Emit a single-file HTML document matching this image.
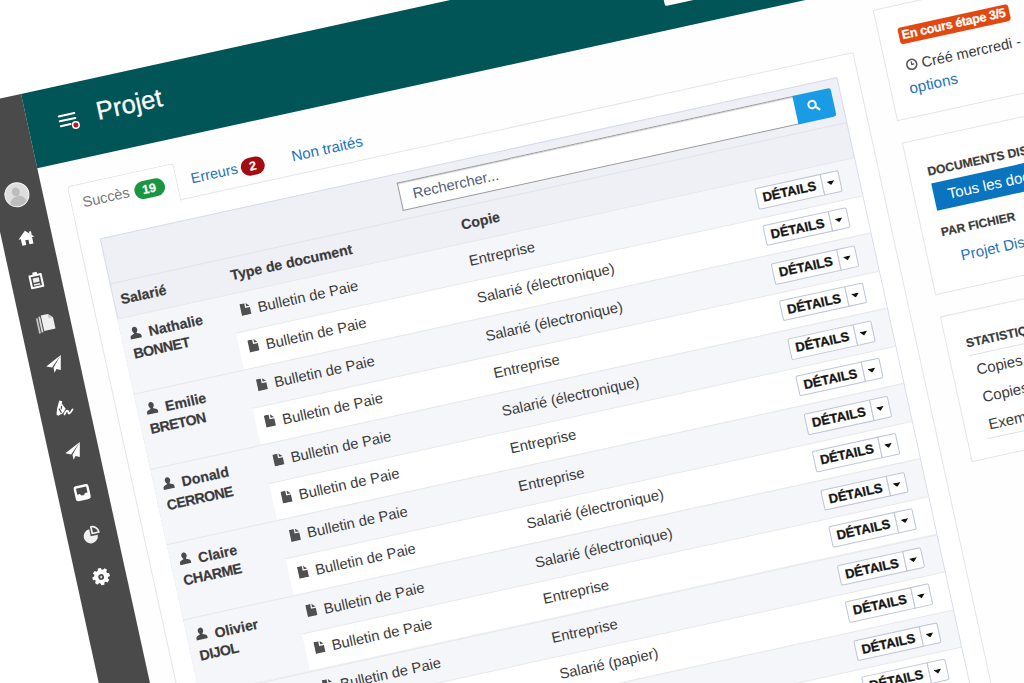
<!DOCTYPE html><html><head><meta charset="utf-8"><title>Projet</title><style>
*{box-sizing:border-box}
html,body{margin:0;padding:0}
body{width:1024px;height:683px;overflow:hidden;background:#fff;font-family:"Liberation Sans",sans-serif;color:#333;position:relative}
#stage{position:absolute;left:0;top:0;width:0;height:0;transform-origin:0 0;transform:translate(21px,94px) rotate(-12.35deg);font-size:14.75px;line-height:20px;color:#3a3a3a}
#stage div,#stage span,#stage svg{position:absolute}
.t{white-space:nowrap}
.b{font-weight:700;font-size:14.2px;-webkit-text-stroke:0.2px currentColor}
.card{background:#fff;border:1px solid #e4e5ea}
.row{left:46px;width:754px;height:38.55px;border-top:1px solid #e6e7ea}
.odd{background:#f5f6fa}
.even{background:#f5f6fa;border-top:none}
.nm{left:46px;width:112px;height:60px}
.even .w{left:112.700px;top:0;right:0;bottom:0;background:#fff;border-top:1px solid #e6e7ea}
.btn{background:#fff;border:1px solid #bcc5d7;height:21.5px;top:8.2px;font-weight:700;font-size:13px;line-height:19.5px;color:#151515;text-align:center;-webkit-text-stroke:0.3px #151515}
.ic{display:block}
</style></head><body><div id="stage">
<div style="left:0;top:75px;width:1300px;height:900px;background:#fefefe"></div>
<div style="left:-50px;top:0;width:50px;height:900px;background:#4a4a4a"></div>
<div style="left:0;top:0;width:1300px;height:76px;background:#015557"></div>
<div style="left:648px;top:20px;width:48px;height:32px;background:#fff;border-radius:2px"></div>
<svg style="left:30px;top:26px" width="22" height="22" viewBox="0 0 22 22"><g stroke="#fff" stroke-width="2" stroke-linecap="round"><path d="M2 4h16M2 9h16M2 14h10"/></g><circle cx="17" cy="16" r="4" fill="#fff"/><circle cx="17" cy="16" r="2.500" fill="#c4161c"/></svg>
<div class="t" style="left:70px;top:18px;font-size:25.6px;line-height:30px;color:#fff;-webkit-text-stroke:0.3px #fff">Projet</div>
<div style="left:-38.5px;top:85px;width:25px;height:25px;border-radius:50%;background:#dedede;border:1.5px solid #fafafa;overflow:hidden"><div style="left:7.5px;top:4px;width:8px;height:9px;border-radius:50%;background:#bdbdbd"></div><div style="left:3px;top:13px;width:17px;height:14px;border-radius:8px 8px 0 0;background:#bdbdbd"></div></div>
<svg style="left:-35px;top:132px" width="19" height="19" viewBox="0 0 20 20"><path d="M10 2.5 L1.5 10.5 H4 V17.5 H8.3 V12.5 H11.7 V17.5 H16 V10.5 H18.500 Z M14 4.3 h2.2 v3.8 L14 6 Z" fill="#fff"/></svg>
<svg style="left:-34.5px;top:176px" width="18" height="18" viewBox="0 0 20 20"><path d="M7.5 3.5 V1 h5 v2.500 H16.500 a1 1 0 0 1 1 1 V18 a1 1 0 0 1 -1 1 H3.5 a1 1 0 0 1 -1 -1 V4.5 a1 1 0 0 1 1 -1 Z" fill="#fff"/><rect x="4.800" y="5.800" width="10.400" height="11" fill="#4a4a4a"/><rect x="6.500" y="7.500" width="7" height="5" fill="#eee"/><rect x="6.500" y="14" width="7" height="1.800" fill="#eee"/></svg>
<svg style="left:-35.5px;top:218.5px" width="20" height="20" viewBox="0 0 20 20"><path d="M7 1.500 h7 l4.500 4.500 V17.500 H7 Z" fill="#f0f0f0"/><path d="M14 1.500 v4.500 h4.500" fill="#c8c8c8"/><rect x="4.200" y="2.500" width="1.800" height="16" fill="#d8d8d8"/><rect x="1.500" y="3.500" width="1.800" height="15.500" fill="#c4c4c4"/></svg>
<svg style="left:-35px;top:261.5px" width="19" height="19" viewBox="0 0 20 20"><path d="M19 1.5 L1.5 10 L7.2 12.4 Z M19 1.5 L8.6 13 L8.6 18.5 L11.4 15 L15.6 17 Z" fill="#fff"/></svg>
<svg style="left:-36px;top:305.5px" width="21" height="21" viewBox="0 0 20 20"><path d="M7.500 1.500 l2.500 1.200 -.8 2.300 2.600 5.500 -3.300 3.500 -5 1.500 -1.500 -1.500 2 -6 Z" fill="#fff"/><path d="M5.500 9 l1.500 4.500 M8.500 7 l-1 3" stroke="#4a4a4a" stroke-width="1.100" fill="none"/><path d="M9.500 15.500 c2 -3.500 4.500 -3.500 4 -1.500 s1 2.500 4.500 -1.500" stroke="#fff" stroke-width="1.700" fill="none" stroke-linecap="round"/></svg>
<svg style="left:-35px;top:351px" width="19" height="19" viewBox="0 0 20 20"><path d="M19 1.5 L1.5 10 L7.2 12.4 Z M19 1.5 L8.6 13 L8.6 18.5 L11.4 15 L15.6 17 Z" fill="#fff"/></svg>
<svg style="left:-35px;top:392.8px" width="19" height="19" viewBox="0 0 20 20"><rect x="2" y="2" width="16" height="16" rx="2.500" fill="#fff"/><path d="M4.500 4.500 h11 v6.500 h-2.800 l-1.200 1.800 h-3 l-1.200 -1.800 H4.500 Z" fill="#4a4a4a"/></svg>
<svg style="left:-35px;top:436px" width="19" height="19" viewBox="0 0 20 20"><path d="M9 4 A7.500 7.500 0 1 0 16.500 11.500 H9 Z" fill="#f0f0f0"/><path d="M11.200 1.800 A7.300 7.300 0 0 1 18.300 9 H11.200 Z" fill="none" stroke="#f0f0f0" stroke-width="1.800" stroke-linejoin="round"/></svg>
<svg style="left:-34.5px;top:479.7px" width="18" height="18" viewBox="0 0 20 20"><path d="M8.300 1.500h3.400l.5 2.300 1.500.7 2-1.300 2.400 2.400-1.300 2 .7 1.500 2.300.5v3.400l-2.300.5-.7 1.500 1.300 2-2.400 2.400-2-1.300-1.500.7-.5 2.300H8.300l-.5-2.300-1.500-.7-2 1.300-2.400-2.400 1.300-2-.7-1.500L.2 13.700V10.300l2.300-.5.7-1.500-1.300-2 2.400-2.400 2 1.300 1.500-.7Z" transform="translate(0,-2)" fill="#fff"/><circle cx="10" cy="10" r="3.2" fill="#4a4a4a"/><circle cx="10" cy="10" r="1.3" fill="#ddd"/></svg>
<div class="card" style="left:25px;top:137px;width:797px;height:800px"></div>
<div style="left:25px;top:100px;width:109px;height:39.5px;background:#fff;border:1px solid #dfe3ec;border-bottom:none;border-radius:4px 4px 0 0"></div>
<div class="t" style="left:37px;top:108.5px;font-size:14.6px;color:#777">Succès</div>
<div class="t b" style="left:89.500px;top:111px;width:31px;height:18px;border-radius:9px;background:#1a9641;color:#fff;font-size:12.500px;line-height:18px;text-align:center">19</div>
<div class="t" style="left:148px;top:108.5px;font-size:14.5px;color:#1b74b8">Erreurs</div>
<div class="t b" style="left:199px;top:111px;width:24px;height:18px;border-radius:9px;background:#a30d12;color:#fff;font-size:12.500px;line-height:18px;text-align:center">2</div>
<div class="t" style="left:251px;top:108.5px;font-size:15px;color:#1b74b8">Non traités</div>
<div style="left:46px;top:157.500px;width:754.500px;height:800px;background:#eff0f5;border:1px solid #d6dcee"></div>
<div style="left:347.500px;top:167px;width:406px;height:28.500px;background:#fff;border:1px solid #9a9a9a;border-right:none;box-shadow:inset 0 1px 1px rgba(0,0,0,.15)"></div>
<div class="t" style="left:361.500px;top:171px;color:#50607a">Rechercher...</div>
<div style="left:752.500px;top:167px;width:39.200px;height:28.500px;background:#1a9be6;border-radius:0 3px 3px 0"></div>
<svg style="left:765px;top:174px" width="14" height="14" viewBox="0 0 14 14"><circle cx="5.500" cy="5.500" r="3.700" fill="none" stroke="#fff" stroke-width="2"/><path d="M8.500 8.500l3.2 3.200" stroke="#fff" stroke-width="2.200" stroke-linecap="round"/></svg>
<div style="left:46px;top:203.800px;width:754px;height:36px;border-top:1px solid #e2e3e8"></div>
<div class="t b" style="left:53.500px;top:212.3px">Salarié</div>
<div class="t b" style="left:166px;top:212.3px">Type de document</div>
<div class="t b" style="left:402px;top:212.3px">Copie</div>
<div class="row odd" style="top:240px"><svg style="left:122.3px;top:10.8px" viewBox="0 0 12 14" width="10.500" height="12.500"><path d="M.5 0H6V5.5H11.5V14H.5Z M7.5 0L11.5 4H7.5Z" fill="#505050"/></svg><div class="t" style="left:139.8px;top:8.2px">Bulletin de Paie</div><div class="t" style="left:356px;top:8.2px">Entreprise</div><div class="btn" style="left:650px;width:67.5px;border-radius:2px 0 0 2px">DÉTAILS</div><div class="btn" style="left:716.5px;width:19px;border-radius:0 2px 2px 0"><svg style="left:4.6px;top:8px" width="8" height="4.3" viewBox="0 0 8 5" preserveAspectRatio="none"><path d="M0 0h8L4 5z" fill="#111"/></svg></div></div>
<div class="row even" style="top:278.55px"><div class="w"></div><svg style="left:122.3px;top:10.8px" viewBox="0 0 12 14" width="10.500" height="12.500"><path d="M.5 0H6V5.5H11.5V14H.5Z M7.5 0L11.5 4H7.5Z" fill="#505050"/></svg><div class="t" style="left:139.8px;top:8.2px">Bulletin de Paie</div><div class="t" style="left:356px;top:8.2px">Salarié (électronique)</div><div class="btn" style="left:650px;width:67.5px;border-radius:2px 0 0 2px">DÉTAILS</div><div class="btn" style="left:716.5px;width:19px;border-radius:0 2px 2px 0"><svg style="left:4.6px;top:8px" width="8" height="4.3" viewBox="0 0 8 5" preserveAspectRatio="none"><path d="M0 0h8L4 5z" fill="#111"/></svg></div></div>
<div class="row odd" style="top:317.1px"><svg style="left:122.3px;top:10.8px" viewBox="0 0 12 14" width="10.500" height="12.500"><path d="M.5 0H6V5.5H11.5V14H.5Z M7.5 0L11.5 4H7.5Z" fill="#505050"/></svg><div class="t" style="left:139.8px;top:8.2px">Bulletin de Paie</div><div class="t" style="left:356px;top:8.2px">Salarié (électronique)</div><div class="btn" style="left:650px;width:67.5px;border-radius:2px 0 0 2px">DÉTAILS</div><div class="btn" style="left:716.5px;width:19px;border-radius:0 2px 2px 0"><svg style="left:4.6px;top:8px" width="8" height="4.3" viewBox="0 0 8 5" preserveAspectRatio="none"><path d="M0 0h8L4 5z" fill="#111"/></svg></div></div>
<div class="row even" style="top:355.65px"><div class="w"></div><svg style="left:122.3px;top:10.8px" viewBox="0 0 12 14" width="10.500" height="12.500"><path d="M.5 0H6V5.5H11.5V14H.5Z M7.5 0L11.5 4H7.5Z" fill="#505050"/></svg><div class="t" style="left:139.8px;top:8.2px">Bulletin de Paie</div><div class="t" style="left:356px;top:8.2px">Entreprise</div><div class="btn" style="left:650px;width:67.5px;border-radius:2px 0 0 2px">DÉTAILS</div><div class="btn" style="left:716.5px;width:19px;border-radius:0 2px 2px 0"><svg style="left:4.6px;top:8px" width="8" height="4.3" viewBox="0 0 8 5" preserveAspectRatio="none"><path d="M0 0h8L4 5z" fill="#111"/></svg></div></div>
<div class="row odd" style="top:394.2px"><svg style="left:122.3px;top:10.8px" viewBox="0 0 12 14" width="10.500" height="12.500"><path d="M.5 0H6V5.5H11.5V14H.5Z M7.5 0L11.5 4H7.5Z" fill="#505050"/></svg><div class="t" style="left:139.8px;top:8.2px">Bulletin de Paie</div><div class="t" style="left:356px;top:8.2px">Salarié (électronique)</div><div class="btn" style="left:650px;width:67.5px;border-radius:2px 0 0 2px">DÉTAILS</div><div class="btn" style="left:716.5px;width:19px;border-radius:0 2px 2px 0"><svg style="left:4.6px;top:8px" width="8" height="4.3" viewBox="0 0 8 5" preserveAspectRatio="none"><path d="M0 0h8L4 5z" fill="#111"/></svg></div></div>
<div class="row even" style="top:432.75px"><div class="w"></div><svg style="left:122.3px;top:10.8px" viewBox="0 0 12 14" width="10.500" height="12.500"><path d="M.5 0H6V5.5H11.5V14H.5Z M7.5 0L11.5 4H7.5Z" fill="#505050"/></svg><div class="t" style="left:139.8px;top:8.2px">Bulletin de Paie</div><div class="t" style="left:356px;top:8.2px">Entreprise</div><div class="btn" style="left:650px;width:67.5px;border-radius:2px 0 0 2px">DÉTAILS</div><div class="btn" style="left:716.5px;width:19px;border-radius:0 2px 2px 0"><svg style="left:4.6px;top:8px" width="8" height="4.3" viewBox="0 0 8 5" preserveAspectRatio="none"><path d="M0 0h8L4 5z" fill="#111"/></svg></div></div>
<div class="row odd" style="top:471.3px"><svg style="left:122.3px;top:10.8px" viewBox="0 0 12 14" width="10.500" height="12.500"><path d="M.5 0H6V5.5H11.5V14H.5Z M7.5 0L11.5 4H7.5Z" fill="#505050"/></svg><div class="t" style="left:139.8px;top:8.2px">Bulletin de Paie</div><div class="t" style="left:356px;top:8.2px">Entreprise</div><div class="btn" style="left:650px;width:67.5px;border-radius:2px 0 0 2px">DÉTAILS</div><div class="btn" style="left:716.5px;width:19px;border-radius:0 2px 2px 0"><svg style="left:4.6px;top:8px" width="8" height="4.3" viewBox="0 0 8 5" preserveAspectRatio="none"><path d="M0 0h8L4 5z" fill="#111"/></svg></div></div>
<div class="row even" style="top:509.85px"><div class="w"></div><svg style="left:122.3px;top:10.8px" viewBox="0 0 12 14" width="10.500" height="12.500"><path d="M.5 0H6V5.5H11.5V14H.5Z M7.5 0L11.5 4H7.5Z" fill="#505050"/></svg><div class="t" style="left:139.8px;top:8.2px">Bulletin de Paie</div><div class="t" style="left:356px;top:8.2px">Salarié (électronique)</div><div class="btn" style="left:650px;width:67.5px;border-radius:2px 0 0 2px">DÉTAILS</div><div class="btn" style="left:716.5px;width:19px;border-radius:0 2px 2px 0"><svg style="left:4.6px;top:8px" width="8" height="4.3" viewBox="0 0 8 5" preserveAspectRatio="none"><path d="M0 0h8L4 5z" fill="#111"/></svg></div></div>
<div class="row odd" style="top:548.4px"><svg style="left:122.3px;top:10.8px" viewBox="0 0 12 14" width="10.500" height="12.500"><path d="M.5 0H6V5.5H11.5V14H.5Z M7.5 0L11.5 4H7.5Z" fill="#505050"/></svg><div class="t" style="left:139.8px;top:8.2px">Bulletin de Paie</div><div class="t" style="left:356px;top:8.2px">Salarié (électronique)</div><div class="btn" style="left:650px;width:67.5px;border-radius:2px 0 0 2px">DÉTAILS</div><div class="btn" style="left:716.5px;width:19px;border-radius:0 2px 2px 0"><svg style="left:4.6px;top:8px" width="8" height="4.3" viewBox="0 0 8 5" preserveAspectRatio="none"><path d="M0 0h8L4 5z" fill="#111"/></svg></div></div>
<div class="row even" style="top:586.95px"><div class="w"></div><svg style="left:122.3px;top:10.8px" viewBox="0 0 12 14" width="10.500" height="12.500"><path d="M.5 0H6V5.5H11.5V14H.5Z M7.5 0L11.5 4H7.5Z" fill="#505050"/></svg><div class="t" style="left:139.8px;top:8.2px">Bulletin de Paie</div><div class="t" style="left:356px;top:8.2px">Entreprise</div><div class="btn" style="left:650px;width:67.5px;border-radius:2px 0 0 2px">DÉTAILS</div><div class="btn" style="left:716.5px;width:19px;border-radius:0 2px 2px 0"><svg style="left:4.6px;top:8px" width="8" height="4.3" viewBox="0 0 8 5" preserveAspectRatio="none"><path d="M0 0h8L4 5z" fill="#111"/></svg></div></div>
<div class="row odd" style="top:625.5px"><svg style="left:122.3px;top:10.8px" viewBox="0 0 12 14" width="10.500" height="12.500"><path d="M.5 0H6V5.5H11.5V14H.5Z M7.5 0L11.5 4H7.5Z" fill="#505050"/></svg><div class="t" style="left:139.8px;top:8.2px">Bulletin de Paie</div><div class="t" style="left:356px;top:8.2px">Entreprise</div><div class="btn" style="left:650px;width:67.5px;border-radius:2px 0 0 2px">DÉTAILS</div><div class="btn" style="left:716.5px;width:19px;border-radius:0 2px 2px 0"><svg style="left:4.6px;top:8px" width="8" height="4.3" viewBox="0 0 8 5" preserveAspectRatio="none"><path d="M0 0h8L4 5z" fill="#111"/></svg></div></div>
<div class="row even" style="top:664.05px"><div class="w"></div><svg style="left:122.3px;top:10.8px" viewBox="0 0 12 14" width="10.500" height="12.500"><path d="M.5 0H6V5.5H11.5V14H.5Z M7.5 0L11.5 4H7.5Z" fill="#505050"/></svg><div class="t" style="left:139.8px;top:8.2px">Bulletin de Paie</div><div class="t" style="left:356px;top:8.2px">Salarié (papier)</div><div class="btn" style="left:650px;width:67.5px;border-radius:2px 0 0 2px">DÉTAILS</div><div class="btn" style="left:716.5px;width:19px;border-radius:0 2px 2px 0"><svg style="left:4.6px;top:8px" width="8" height="4.3" viewBox="0 0 8 5" preserveAspectRatio="none"><path d="M0 0h8L4 5z" fill="#111"/></svg></div></div>
<div class="row odd" style="top:702.6px"><svg style="left:122.3px;top:10.8px" viewBox="0 0 12 14" width="10.500" height="12.500"><path d="M.5 0H6V5.5H11.5V14H.5Z M7.5 0L11.5 4H7.5Z" fill="#505050"/></svg><div class="t" style="left:139.8px;top:8.2px">Bulletin de Paie</div><div class="t" style="left:356px;top:8.2px">Entreprise</div><div class="btn" style="left:650px;width:67.5px;border-radius:2px 0 0 2px">DÉTAILS</div><div class="btn" style="left:716.5px;width:19px;border-radius:0 2px 2px 0"><svg style="left:4.6px;top:8px" width="8" height="4.3" viewBox="0 0 8 5" preserveAspectRatio="none"><path d="M0 0h8L4 5z" fill="#111"/></svg></div></div>
<div class="row even" style="top:741.15px"><div class="w"></div><svg style="left:122.3px;top:10.8px" viewBox="0 0 12 14" width="10.500" height="12.500"><path d="M.5 0H6V5.5H11.5V14H.5Z M7.5 0L11.5 4H7.5Z" fill="#505050"/></svg><div class="t" style="left:139.8px;top:8.2px">Bulletin de Paie</div><div class="t" style="left:356px;top:8.2px">Salarié (électronique)</div><div class="btn" style="left:650px;width:67.5px;border-radius:2px 0 0 2px">DÉTAILS</div><div class="btn" style="left:716.5px;width:19px;border-radius:0 2px 2px 0"><svg style="left:4.6px;top:8px" width="8" height="4.3" viewBox="0 0 8 5" preserveAspectRatio="none"><path d="M0 0h8L4 5z" fill="#111"/></svg></div></div>
<div class="row odd" style="top:779.7px"><svg style="left:122.3px;top:10.8px" viewBox="0 0 12 14" width="10.500" height="12.500"><path d="M.5 0H6V5.5H11.5V14H.5Z M7.5 0L11.5 4H7.5Z" fill="#505050"/></svg><div class="t" style="left:139.8px;top:8.2px">Bulletin de Paie</div><div class="t" style="left:356px;top:8.2px">Entreprise</div><div class="btn" style="left:650px;width:67.5px;border-radius:2px 0 0 2px">DÉTAILS</div><div class="btn" style="left:716.5px;width:19px;border-radius:0 2px 2px 0"><svg style="left:4.6px;top:8px" width="8" height="4.3" viewBox="0 0 8 5" preserveAspectRatio="none"><path d="M0 0h8L4 5z" fill="#111"/></svg></div></div>
<div class="row even" style="top:818.25px"><div class="w"></div><svg style="left:122.3px;top:10.8px" viewBox="0 0 12 14" width="10.500" height="12.500"><path d="M.5 0H6V5.5H11.5V14H.5Z M7.5 0L11.5 4H7.5Z" fill="#505050"/></svg><div class="t" style="left:139.8px;top:8.2px">Bulletin de Paie</div><div class="t" style="left:356px;top:8.2px">Salarié (papier)</div><div class="btn" style="left:650px;width:67.5px;border-radius:2px 0 0 2px">DÉTAILS</div><div class="btn" style="left:716.5px;width:19px;border-radius:0 2px 2px 0"><svg style="left:4.6px;top:8px" width="8" height="4.3" viewBox="0 0 8 5" preserveAspectRatio="none"><path d="M0 0h8L4 5z" fill="#111"/></svg></div></div>
<div class="nm" style="top:240px"><svg style="left:8px;top:11px" viewBox="0 0 14 14" width="13" height="13"><path d="M7 .6c1.7 0 2.9 1.4 2.9 3.2 0 1.3-.6 2.6-1.4 3.2v.9c1.6 .5 4.3 1.5 4.5 3.1v2.4H1V11c.2-1.6 2.9-2.6 4.5-3.100V7C4.700 6.400 4.100 5.100 4.100 3.800 4.100 2 5.300 .6 7 .6z" fill="#4a4a4a"/></svg><div class="t b" style="left:28px;top:9.3px">Nathalie</div><div class="t b" style="left:8.5px;top:28.4px;letter-spacing:-0.5px">BONNET</div></div>
<div class="nm" style="top:317.1px"><svg style="left:8px;top:11px" viewBox="0 0 14 14" width="13" height="13"><path d="M7 .6c1.7 0 2.9 1.4 2.9 3.2 0 1.3-.6 2.6-1.4 3.2v.9c1.6 .5 4.3 1.5 4.5 3.1v2.4H1V11c.2-1.6 2.9-2.6 4.5-3.100V7C4.700 6.400 4.100 5.100 4.100 3.800 4.100 2 5.300 .6 7 .6z" fill="#4a4a4a"/></svg><div class="t b" style="left:28px;top:9.3px">Emilie</div><div class="t b" style="left:8.5px;top:28.4px;letter-spacing:-0.5px">BRETON</div></div>
<div class="nm" style="top:394.2px"><svg style="left:8px;top:11px" viewBox="0 0 14 14" width="13" height="13"><path d="M7 .6c1.7 0 2.9 1.4 2.9 3.2 0 1.3-.6 2.6-1.4 3.2v.9c1.6 .5 4.3 1.5 4.5 3.1v2.4H1V11c.2-1.6 2.9-2.6 4.5-3.100V7C4.700 6.400 4.100 5.100 4.100 3.800 4.100 2 5.300 .6 7 .6z" fill="#4a4a4a"/></svg><div class="t b" style="left:28px;top:9.3px">Donald</div><div class="t b" style="left:8.5px;top:28.4px;letter-spacing:-0.5px">CERRONE</div></div>
<div class="nm" style="top:471.3px"><svg style="left:8px;top:11px" viewBox="0 0 14 14" width="13" height="13"><path d="M7 .6c1.7 0 2.9 1.4 2.9 3.2 0 1.3-.6 2.6-1.4 3.2v.9c1.6 .5 4.3 1.5 4.5 3.1v2.4H1V11c.2-1.6 2.9-2.6 4.5-3.100V7C4.700 6.400 4.100 5.100 4.100 3.800 4.100 2 5.300 .6 7 .6z" fill="#4a4a4a"/></svg><div class="t b" style="left:28px;top:9.3px">Claire</div><div class="t b" style="left:8.5px;top:28.4px;letter-spacing:-0.5px">CHARME</div></div>
<div class="nm" style="top:548.4px"><svg style="left:8px;top:11px" viewBox="0 0 14 14" width="13" height="13"><path d="M7 .6c1.7 0 2.9 1.4 2.9 3.2 0 1.3-.6 2.6-1.4 3.2v.9c1.6 .5 4.3 1.5 4.5 3.1v2.4H1V11c.2-1.6 2.9-2.6 4.5-3.100V7C4.700 6.400 4.100 5.100 4.100 3.800 4.100 2 5.300 .6 7 .6z" fill="#4a4a4a"/></svg><div class="t b" style="left:28px;top:9.3px">Olivier</div><div class="t b" style="left:8.5px;top:28.4px;letter-spacing:-0.5px">DIJOL</div></div>
<div class="nm" style="top:625.5px"><svg style="left:8px;top:11px" viewBox="0 0 14 14" width="13" height="13"><path d="M7 .6c1.7 0 2.9 1.4 2.9 3.2 0 1.3-.6 2.6-1.4 3.2v.9c1.6 .5 4.3 1.5 4.5 3.1v2.4H1V11c.2-1.6 2.9-2.6 4.5-3.100V7C4.700 6.400 4.100 5.100 4.100 3.800 4.100 2 5.300 .6 7 .6z" fill="#4a4a4a"/></svg><div class="t b" style="left:28px;top:9.3px">Sophie</div><div class="t b" style="left:8.5px;top:28.4px;letter-spacing:-0.5px">DUPONT</div></div>
<div class="nm" style="top:702.6px"><svg style="left:8px;top:11px" viewBox="0 0 14 14" width="13" height="13"><path d="M7 .6c1.7 0 2.9 1.4 2.9 3.2 0 1.3-.6 2.6-1.4 3.2v.9c1.6 .5 4.3 1.5 4.5 3.1v2.4H1V11c.2-1.6 2.9-2.6 4.5-3.100V7C4.700 6.400 4.100 5.100 4.100 3.800 4.100 2 5.300 .6 7 .6z" fill="#4a4a4a"/></svg><div class="t b" style="left:28px;top:9.3px">Marc</div><div class="t b" style="left:8.5px;top:28.4px;letter-spacing:-0.5px">DURAND</div></div>
<div class="nm" style="top:779.7px"><svg style="left:8px;top:11px" viewBox="0 0 14 14" width="13" height="13"><path d="M7 .6c1.7 0 2.9 1.4 2.9 3.2 0 1.3-.6 2.6-1.4 3.2v.9c1.6 .5 4.3 1.5 4.5 3.1v2.4H1V11c.2-1.6 2.9-2.6 4.5-3.100V7C4.700 6.400 4.100 5.100 4.100 3.800 4.100 2 5.300 .6 7 .6z" fill="#4a4a4a"/></svg><div class="t b" style="left:28px;top:9.3px">Julie</div><div class="t b" style="left:8.5px;top:28.4px;letter-spacing:-0.5px">FAURE</div></div>
<div class="card" style="left:850px;top:100.200px;width:400px;height:113.500px"></div>
<div class="t b" style="left:869.500px;top:123px;width:113px;height:17px;border-radius:3px;background:#e04a12;color:#fff;font-size:12.6px;letter-spacing:-0.3px;line-height:17px;text-align:center">En cours étape 3/5</div>
<svg style="left:870px;top:154.500px" width="13" height="13" viewBox="0 0 13 13"><circle cx="6.500" cy="6.500" r="5" fill="none" stroke="#555" stroke-width="1.600"/><path d="M6.500 3.500v3.200h2.500" fill="none" stroke="#555" stroke-width="1.300"/></svg>
<div class="t" style="left:886.5px;top:152px;font-size:14.6px">Créé mercredi - <span style="position:static;color:#0b6fb8">12</span></div>
<div class="t" style="left:869px;top:174.5px;font-size:15.3px;color:#1b74b8">options</div>
<div class="card" style="left:850px;top:235.800px;width:400px;height:156px"></div>
<div class="t b" style="left:869px;top:260px;font-size:12.2px">DOCUMENTS DISPONIBLES</div>
<div style="left:869.700px;top:282.3px;width:380px;height:28px;background:#0b74be"></div>
<div class="t" style="left:884px;top:286.3px;color:#fff;font-size:15px">Tous les documents</div>
<div class="t b" style="left:869.3px;top:322.3px;font-size:12px">PAR FICHIER</div>
<div class="t" style="left:883.7px;top:348.8px;color:#1b74b8;font-size:15px">Projet Distribution</div>
<div class="card" style="left:850px;top:413.800px;width:400px;height:149.500px"></div>
<div class="t b" style="left:870px;top:436px;font-size:12.3px">STATISTIQUES</div>
<div style="left:869.500px;top:458.200px;width:380px;height:1px;background:#e2e2e2"></div>
<div class="t" style="left:874.500px;top:463.8px;font-size:15px">Copies envoyées</div>
<div class="t" style="left:874.500px;top:492px;font-size:15px">Copies en attente</div>
<div class="t" style="left:874.500px;top:520.2px;font-size:15px">Exemplaires</div>
<div style="left:869.500px;top:543px;width:380px;height:1px;background:#e2e2e2"></div>
</div></body></html>
